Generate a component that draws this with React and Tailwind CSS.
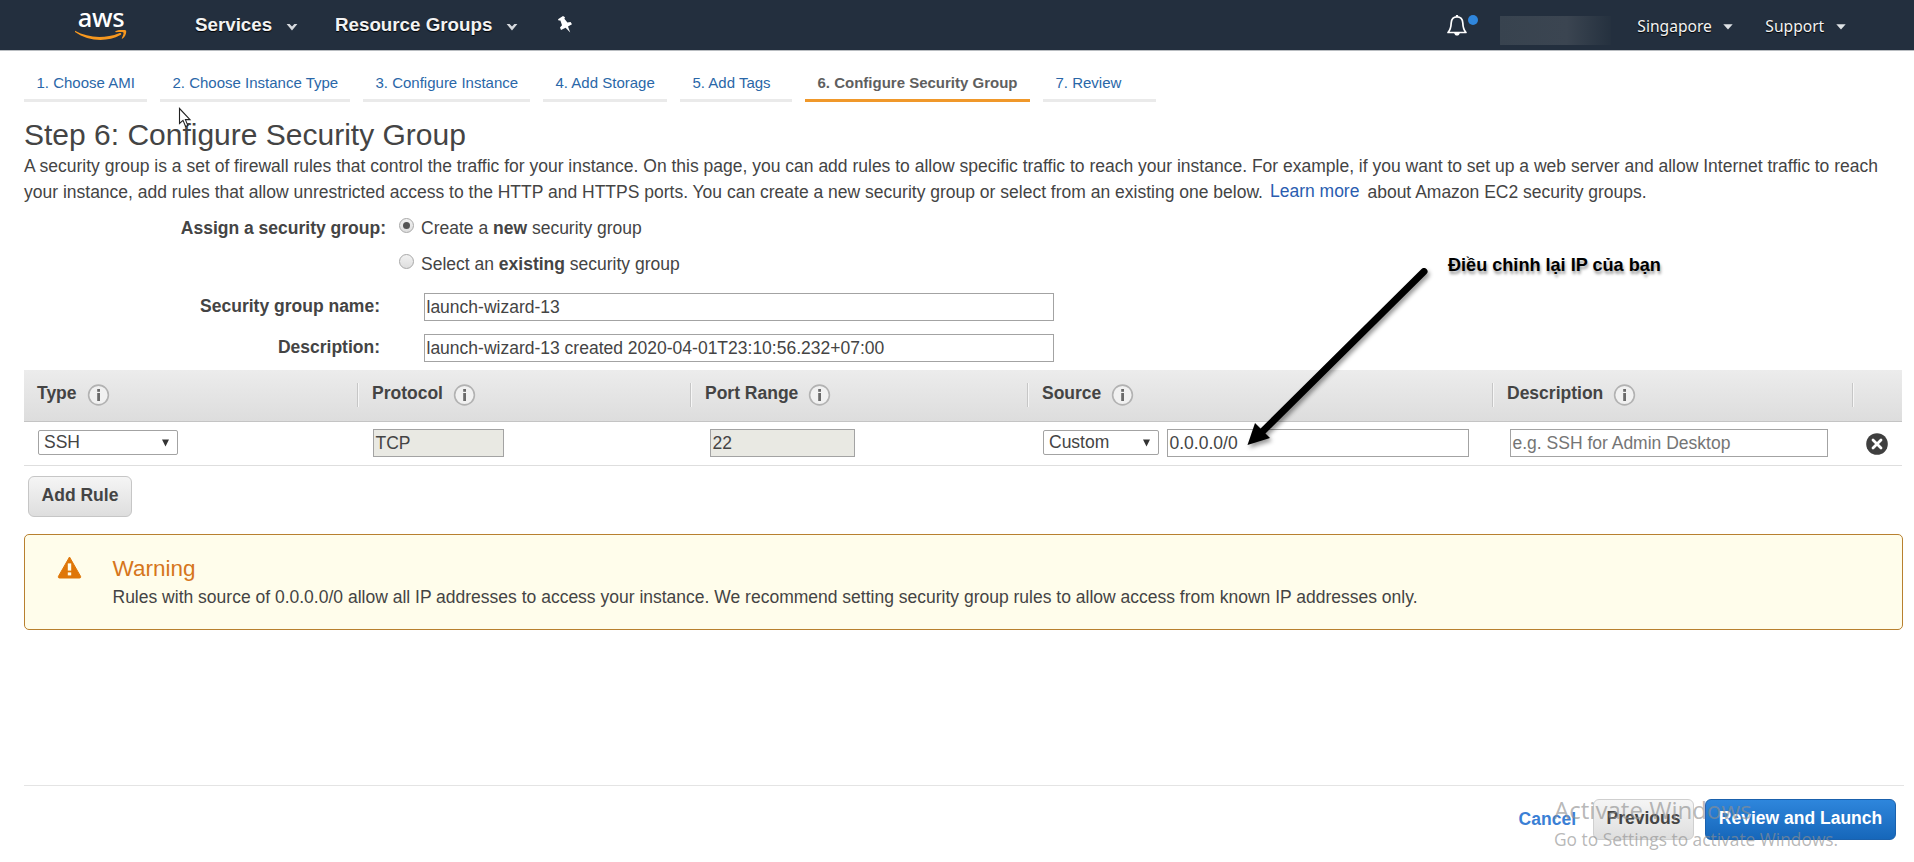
import React from "react";

function Chevron({ className = "" }) {
  return (
    <svg className={className} width="12" height="8" viewBox="0 0 12 8">
      <path d="M0.6 1 L3.6 1 L6 3.4 L8.4 1 L11.4 1 L6 7.4 Z" fill="#d5d9dd" />
    </svg>
  );
}

function Caret({ className = "" }) {
  return (
    <svg className={className} width="10" height="6" viewBox="0 0 10 6">
      <path d="M0.3 0.3 H9.7 L5 5.6 Z" fill="#dfe3e6" />
    </svg>
  );
}

function AwsLogo() {
  return (
    <div className="ml-[74px] flex w-[54px] flex-col items-center">
      <span className="h-[30px] font-['Noto_Sans'] text-[25.5px] leading-[34px] font-medium tracking-[-0.3px] text-white">aws</span>
      <svg width="54" height="12" viewBox="0 0 54 12">
        <path d="M1 0.8 C14 8.2 31 8.8 45 3.2 C47 2.4 48.2 4 46.4 5 C33 12.4 14 11.4 1 1.9 Z" fill="#f7981f" />
        <path d="M41.5 1.2 C45 -0.8 51 -0.6 52 0.6 C52.8 1.8 51.4 7 48.6 8.6 C47.9 9.1 47.6 8.7 47.9 8 C48.8 6.2 50 3.4 49.4 2.6 C48.6 1.7 45 2 42 2.2 C41.2 2.2 41 1.6 41.5 1.2 Z" fill="#f7981f" />
      </svg>
    </div>
  );
}

function Info() {
  return (
    <svg width="23" height="23" viewBox="0 0 23 23">
      <circle cx="11.5" cy="11" r="9.9" fill="#f1f1f1" stroke="#b2b2b2" strokeWidth="1.6" />
      <rect x="10.2" y="5" width="2.8" height="2.8" fill="#6a6a6a" />
      <rect x="10.2" y="9" width="2.8" height="8" fill="#6a6a6a" />
    </svg>
  );
}

function Header() {
  return (
    <header className="flex h-[51px] shrink-0 items-start border-b border-[#b9bdc1] bg-[#232f3e]">
      <div className="h-[50px]">
        <AwsLogo />
      </div>
      <div className="ml-[67px] flex h-[50px] w-[140px] items-center text-[18.75px] font-bold text-[#f3f3f3] [text-shadow:0_1px_1px_#000]">
        <span>Services</span>
        <Chevron className="mt-[4px] ml-[14px]" />
      </div>
      <div className="flex h-[50px] items-center text-[18.75px] font-bold text-[#f3f3f3] [text-shadow:0_1px_1px_#000]">
        <span>Resource Groups</span>
        <Chevron className="mt-[4px] ml-[14px]" />
      </div>
      <svg className="mt-[15px] ml-[39px]" width="16" height="18" viewBox="0 0 16 18">
        <path d="M1 4.2 L6 1 L8 2.2 L7.4 3.8 L10.4 7.4 L13.6 7 L15 9.2 L11 11.6 L13.2 17.4 L8.6 12.8 L4 15 L3 12.4 L5 10.2 L3.4 5.4 L1.6 5.4 Z" fill="#fff" />
      </svg>
      <div className="ml-[873px] flex pt-[14px]">
        <svg width="22" height="23" viewBox="0 0 22 23" fill="none" stroke="#fff" strokeWidth="1.7" strokeLinejoin="round">
          <path d="M2 18.5 C4.4 16 5 13.8 5.2 9 C5.4 5 7.6 2.8 11 2.8 C14.4 2.8 16.6 5 16.8 9 C17 13.8 17.6 16 20 18.5 Z" />
          <path d="M11 1 V2.8" strokeWidth="2.2" />
          <path d="M8.2 19 H13.8 C13.4 22.4 8.6 22.4 8.2 19 Z" fill="#fff" stroke="none" />
        </svg>
        <span className="mt-px h-[10px] w-[10px] rounded-full bg-[#2f86dc]" />
      </div>
      <div className="mt-4 ml-[22px] h-[29px] w-[111px] bg-linear-to-r from-[#38434f] via-[#3b4551] via-60% to-[#25313f]" />
      <div className="ml-[26px] flex h-[53px] w-[128px] items-center font-['Noto_Sans'] text-[15.6px] text-[#f3f3f3] [text-shadow:0_1px_1px_#000]">
        <span>Singapore</span>
        <Caret className="ml-[11px]" />
      </div>
      <div className="flex h-[53px] items-center font-['Noto_Sans'] text-[15.6px] text-[#f3f3f3] [text-shadow:0_1px_1px_#000]">
        <span>Support</span>
        <Caret className="ml-[12px]" />
      </div>
    </header>
  );
}

const steps = [
  { label: "1. Choose AMI", width: "w-[123px]" },
  { label: "2. Choose Instance Type", width: "w-[190px]" },
  { label: "3. Configure Instance", width: "w-[167px]" },
  { label: "4. Add Storage", width: "w-[124px]" },
  { label: "5. Add Tags", width: "w-[112px]" },
  { label: "6. Configure Security Group", width: "w-[225px]", active: true },
  { label: "7. Review", width: "w-[113px]" },
];

function Steps() {
  return (
    <nav className="flex h-[51px] shrink-0 gap-[13px] pl-6 text-[15px]">
      {steps.map((s) => (
        <div
          key={s.label}
          className={`${s.width} h-[51px] border-b-[3px] pt-[21px] pl-[12.5px] leading-[22px] whitespace-nowrap ${
            s.active ? "border-[#f0982a] font-bold text-[#5f5f5f]" : "border-[#eaeaea] text-[#2a67a8]"
          }`}
        >
          {s.label}
        </div>
      ))}
    </nav>
  );
}

function Radio({ checked }) {
  return (
    <span className="flex h-[15px] w-[15px] items-center justify-center rounded-full border border-[#a8a8a8] bg-linear-to-b from-[#f2f2f2] to-[#dedede]">
      {checked && <span className="h-[7px] w-[7px] rounded-full bg-[#555]" />}
    </span>
  );
}

function Arrow({ className = "" }) {
  return (
    <svg className={className} width="7" height="8" viewBox="0 0 7 8">
      <path d="M0 0.5 H7 L3.5 7.5 Z" fill="#333" />
    </svg>
  );
}

function Select({ value, className }) {
  return (
    <div className={`${className} flex h-[25px] items-center justify-between rounded-[2px] border border-[#a3a3a3] bg-white pr-2 pl-[5px]`}>
      <span>{value}</span>
      <Arrow />
    </div>
  );
}

function Field({ value, className = "" }) {
  return (
    <div className={`${className} flex h-7 items-center border border-[#a3a3a3] pl-[1.5px] whitespace-nowrap`}>{value}</div>
  );
}

const columns = [
  { label: "Type", width: "w-[334px]", pad: "pl-[13px]", gap: "gap-[10px]" },
  { label: "Protocol", width: "w-[333px]", pad: "pl-[14px]", gap: "gap-[10px]" },
  { label: "Port Range", width: "w-[337px]", pad: "pl-[14px]", gap: "gap-[10px]" },
  { label: "Source", width: "w-[465px]", pad: "pl-[14px]", gap: "gap-[10px]" },
  { label: "Description", width: "w-[360px]", pad: "pl-[14px]", gap: "gap-[10px]" },
];

function Rules() {
  return (
    <section className="mx-6 mt-[8px] w-[1878px]">
      <div className="flex h-[52px] border-b border-[#c4c4c4] bg-linear-to-b from-[#ececec] to-[#dddddd] pt-[13px]">
        {columns.map((c) => (
          <div key={c.label} className={`${c.width} ${c.pad} ${c.gap} flex h-6 items-center border-r border-[#c6c6c6] font-bold shadow-[1px_0_0_#f6f6f6]`}>
            <span className="-mt-[3px]">{c.label}</span>
            <Info />
          </div>
        ))}
      </div>
      <div className="flex h-[44px] items-start border-b border-[#dedede] pt-[7px]">
        <div className="w-[349px] pt-px pl-[14px]">
          <Select value="SSH" className="w-[140px]" />
        </div>
        <div className="w-[337px]">
          <Field value="TCP" className="w-[131px] bg-[#e9e9e3]" />
        </div>
        <div className="w-[333px]">
          <Field value="22" className="w-[145px] bg-[#e9e9e3]" />
        </div>
        <div className="flex w-[467px] gap-2">
          <Select value="Custom" className="mt-px w-[116px]" />
          <Field value="0.0.0.0/0" className="w-[302px]" />
        </div>
        <Field value="e.g. SSH for Admin Desktop" className="w-[318px] text-[#757575]" />
        <svg className="mt-[4px] ml-[38px]" width="22" height="22" viewBox="0 0 22 22">
          <circle cx="11" cy="11" r="10.8" fill="#3f3f3f" />
          <path d="M7 7 L15 15 M15 7 L7 15" stroke="#fff" strokeWidth="2.8" strokeLinecap="round" />
        </svg>
      </div>
      <div className="mt-[10px] ml-1 flex h-[41px] w-[104px] items-center justify-center rounded-[6px] border border-[#c6c6c6] bg-linear-to-b from-[#f5f5f5] to-[#dedede] pb-[2px] font-bold">
        Add Rule
      </div>
    </section>
  );
}

function Warning() {
  return (
    <section className="mt-[17px] ml-6 flex h-[96px] w-[1879px] rounded-[5px] border border-[#b8802f] bg-[#fffdeb]">
      <svg className="mt-[20px] ml-[32px]" width="25" height="24" viewBox="0 0 25 24">
        <path d="M12.5 2 L23.6 21.4 Q24 23 22.6 23 H2.4 Q1 23 1.4 21.4 Z" fill="#df7607" stroke="#df7607" strokeWidth="1" strokeLinejoin="round" />
        <rect x="10.8" y="8.4" width="3.4" height="7.2" fill="#fffdeb" />
        <rect x="10.8" y="17.4" width="3.4" height="3" fill="#fffdeb" />
      </svg>
      <div className="ml-[30.5px] pt-[20px]">
        <div className="text-[22.5px] leading-[28px] text-[#d6761c]">Warning</div>
        <div className="leading-[28px]">Rules with source of 0.0.0.0/0 allow all IP addresses to access your instance. We recommend setting security group rules to allow access from known IP addresses only.</div>
      </div>
    </section>
  );
}

function Annotation() {
  return (
    <div className="absolute top-[250px] left-[1230px] flex">
      <svg className="drop-shadow-[2px_3px_2px_rgba(0,0,0,0.4)]" width="218" height="205" viewBox="0 0 218 205">
        <path d="M194 21.5 L30 184" stroke="#000" strokeWidth="7" strokeLinecap="round" />
        <path d="M17.5 195 L25 173 L40 188 Z" fill="#000" />
      </svg>
      <span className="mt-[4px] text-[18.1px] leading-[22px] font-bold whitespace-nowrap text-black [text-shadow:1px_3px_3px_rgba(0,0,0,0.4)]">Điều chỉnh lại IP của bạn</span>
    </div>
  );
}

export default function App() {
  return (
    <div className="relative flex h-[862px] w-[1914px] flex-col overflow-hidden bg-white font-['Liberation_Sans',Arial,sans-serif] text-[17.5px] text-[#444]">
      <Header />
      <Steps />
      <main className="flex flex-1 flex-col">
        <h1 className="mt-[15px] ml-6 text-[30px] leading-[36px]">Step 6: Configure Security Group</h1>
        <div className="ml-6 leading-[26px] whitespace-nowrap">
          <p>A security group is a set of firewall rules that control the traffic for your instance. On this page, you can add rules to allow specific traffic to reach your instance. For example, if you want to set up a web server and allow Internet traffic to reach</p>
          <p className="flex">
            <span>your instance, add rules that allow unrestricted access to the HTTP and HTTPS ports. You can create a new security group or select from an existing one below.</span>
            <a className="-mt-px ml-[7px] text-[#2a5db0]">Learn more</a>
            <span className="ml-[8px]">about Amazon EC2 security groups.</span>
          </p>
        </div>
        <div className="mt-[9px] flex h-[28px]">
          <div className="w-[386px] text-right leading-[28px] font-bold">Assign a security group:</div>
          <div className="ml-[13px] pt-[4px]"><Radio checked /></div>
          <div className="ml-[7px] leading-[28px]">Create a <b>new</b> security group</div>
        </div>
        <div className="mt-[8px] flex h-[28px]">
          <div className="w-[386px]" />
          <div className="ml-[13px] pt-[4px]"><Radio /></div>
          <div className="ml-[7px] leading-[28px]">Select an <b>existing</b> security group</div>
        </div>
        <div className="mt-[15px] flex h-7">
          <div className="w-[380px] text-right leading-[26px] font-bold">Security group name:</div>
          <Field value="launch-wizard-13" className="ml-[44px] w-[630px]" />
        </div>
        <div className="mt-[13px] flex h-7">
          <div className="w-[380px] text-right leading-[26px] font-bold">Description:</div>
          <Field value="launch-wizard-13 created 2020-04-01T23:10:56.232+07:00" className="ml-[44px] w-[630px]" />
        </div>
        <Rules />
        <Warning />
      </main>
      <footer className="mx-6 flex h-[77px] w-[1880px] items-start justify-end border-t border-[#e4e4e4] pt-[13px] pr-2 font-bold">
        <span className="mr-[17px] leading-[41px] text-[#3a7fd5]">Cancel</span>
        <div className="mr-[11px] flex h-[41px] w-[101px] items-center justify-center rounded-[6px] border border-[#cfcfcf] bg-linear-to-b from-[#f5f5f5] to-[#dedede] pb-[3px]">Previous</div>
        <div className="flex h-[41px] w-[191px] items-center justify-center rounded-[6px] border border-[#1a61ad] bg-linear-to-b from-[#2e86dc] to-[#1667ba] pb-[3px] text-white">Review and Launch</div>
      </footer>
      <Annotation />
      <div className="pointer-events-none absolute top-[795px] left-[1554px] font-['Open_Sans'] whitespace-nowrap text-[#8f8f8f]/65">
        <div className="text-[24.1px] leading-[30px]">Activate Windows</div>
        <div className="text-[17.35px] leading-[29px]">Go to Settings to activate Windows.</div>
      </div>
      <svg className="absolute top-[107px] left-[178px]" width="14" height="21" viewBox="0 0 14 21">
        <path d="M1.5 1.5 V16.5 L5 13.4 L7.6 19.4 L9.8 18.4 L7.4 12.6 H12 Z" fill="#fff" stroke="#222" strokeWidth="1.1" />
      </svg>
    </div>
  );
}
